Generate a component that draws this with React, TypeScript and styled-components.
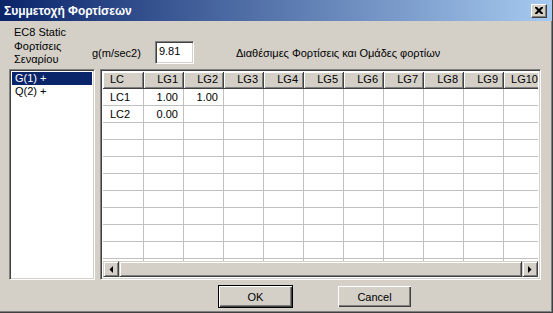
import React from "react";
import styled, { createGlobalStyle } from "styled-components";

const Global = createGlobalStyle`
  html, body { margin: 0; padding: 0; }
  body {
    width: 553px; height: 313px; overflow: hidden;
    background: #d4d0c8;
    font-family: "Liberation Sans", Arial, sans-serif;
    font-size: 11px; color: #000;
  }
`;

const Window = styled.div`
  width: 553px; height: 313px; box-sizing: border-box;
  display: flex; flex-direction: column;
  background: #d4d0c8;
  border-right: 1px solid #404040; border-bottom: 1px solid #404040;
  box-shadow: inset -1px -1px 0 #808080;
`;

const TitleBar = styled.div`
  height: 21px; flex: none; display: flex; align-items: center;
  justify-content: space-between;
  background: linear-gradient(to right, #0a246a, #a6caf0);
  padding: 0 5px 0 4px;
`;

const Title = styled.span`
  color: #fff; font-weight: bold; font-size: 12px;
  font-family: "Liberation Sans", Arial, sans-serif;
`;

const CloseButton = styled.div`
  width: 16px; height: 14px; box-sizing: border-box;
  background: #d4d0c8;
  border-top: 1px solid #fff; border-left: 1px solid #fff;
  border-right: 1px solid #404040; border-bottom: 1px solid #404040;
  box-shadow: inset -1px -1px 0 #808080;
  display: flex; align-items: center; justify-content: center;
`;

const Body = styled.div`
  flex: 1; display: flex; flex-direction: column;
`;

const Main = styled.div`
  display: flex; padding-left: 9px; gap: 5px;
`;

const LeftColumn = styled.div`
  width: 86px; display: flex; flex-direction: column;
  padding-top: 5px;
`;

const Label = styled.div<{ $mb?: number }>`
  line-height: 13px; padding-left: 5px;
  margin-bottom: ${(p) => p.$mb ?? 0}px;
`;

const Sunken = styled.div`
  box-sizing: border-box;
  border-top: 1px solid #808080; border-left: 1px solid #808080;
  border-right: 1px solid #fff; border-bottom: 1px solid #fff;
  box-shadow: inset 1px 1px 0 #404040, inset -1px -1px 0 #d4d0c8;
`;

const ListBox = styled(Sunken)`
  height: 211px; background: #fff; padding: 2px;
  margin-top: 3px;
`;

const ListItem = styled.div<{ $sel?: boolean }>`
  height: 13px; line-height: 13px; padding-left: 3px;
  background: ${(p) => (p.$sel ? "#0a246a" : "transparent")};
  color: ${(p) => (p.$sel ? "#fff" : "#000")};
`;

const RightColumn = styled.div`
  display: flex; flex-direction: column; padding-top: 20px;
`;

const TopRow = styled.div`
  display: flex; align-items: center; height: 23px;
  margin-left: -8px; margin-bottom: 5px;
`;

const InputBox = styled(Sunken)`
  width: 39px; height: 23px; background: #fff;
  margin-left: 14px; margin-right: 42px;
  padding: 3px 0 0 3px; line-height: 13px;
`;

const GridFrame = styled(Sunken)`
  width: 441px; height: 211px; background: #fff;
  padding: 2px; display: flex; flex-direction: column; overflow: hidden;
`;

const GridArea = styled.div`
  flex: 1; overflow: hidden;
`;

const GridRow = styled.div`
  display: grid; grid-template-columns: 41px repeat(10, 40px);
  height: 17px;
`;

const HeadCell = styled.div<{ $left?: boolean }>`
  box-sizing: border-box; height: 17px; line-height: 15px;
  background: #d4d0c8;
  border-right: 1px solid #404040; border-bottom: 1px solid #404040;
  box-shadow: inset 1px 1px 0 #fff, inset -1px -1px 0 #808080;
  text-align: ${(p) => (p.$left ? "left" : "right")};
  padding: ${(p) => (p.$left ? "0 0 0 7px" : "0 5px 0 0")};
  white-space: nowrap; overflow: hidden;
`;

const Cell = styled.div<{ $left?: boolean }>`
  box-sizing: border-box; height: 17px; line-height: 16px;
  border-right: 1px solid #c0c0c0; border-bottom: 1px solid #c0c0c0;
  text-align: ${(p) => (p.$left ? "left" : "right")};
  padding: ${(p) => (p.$left ? "0 0 0 7px" : "0 5px 0 0")};
  white-space: nowrap;
`;

const ScrollBar = styled.div`
  height: 16px; flex: none; display: flex; background: #e8e6e1;
`;

const Raised = styled.div`
  box-sizing: border-box; background: #d4d0c8;
  border-top: 1px solid #d4d0c8; border-left: 1px solid #d4d0c8;
  border-right: 1px solid #404040; border-bottom: 1px solid #404040;
  box-shadow: inset 1px 1px 0 #fff, inset -1px -1px 0 #808080;
`;

const ArrowButton = styled(Raised)`
  width: 16px; height: 16px; flex: none;
  display: flex; align-items: center; justify-content: center;
`;

const Thumb = styled(Raised)`
  flex: 1; height: 16px;
`;

const ButtonRow = styled.div`
  display: flex; gap: 44px; padding-left: 218px; margin-top: 5px;
`;

const Button = styled.div<{ $default?: boolean }>`
  width: 75px; height: 23px; box-sizing: border-box;
  display: flex; align-items: center; justify-content: center;
  background: #d4d0c8;
  border: 1px solid ${(p) => (p.$default ? "#000" : "transparent")};
  box-shadow: inset 1px 1px 0 #fff, inset -1px -1px 0 #404040, inset -2px -2px 0 #808080;
`;

const cols = ["LC", "LG1", "LG2", "LG3", "LG4", "LG5", "LG6", "LG7", "LG8", "LG9", "LG10"];
const data: string[][] = [
  ["LC1", "1.00", "1.00"],
  ["LC2", "0.00"],
];

export default function App() {
  const rows: string[][] = [];
  for (let i = 0; i < 11; i++) rows.push(data[i] ?? []);
  return (
    <>
      <Global />
      <Window>
        <TitleBar>
          <Title>Συμμετοχή Φορτίσεων</Title>
          <CloseButton>
            <svg width="8" height="7" viewBox="0 0 8 7">
              <path d="M0 0h2l2 2 2-2h2v1L5.5 3.5 8 6v1H6L4 5 2 7H0V6l2.5-2.5L0 1z" fill="#000" />
            </svg>
          </CloseButton>
        </TitleBar>
        <Body>
          <Main>
            <LeftColumn>
              <Label $mb={1}>EC8 Static</Label>
              <Label>
                Φορτίσεις
                <br />
                Σεναρίου
              </Label>
              <ListBox>
                <ListItem $sel>G(1) +</ListItem>
                <ListItem>Q(2) +</ListItem>
              </ListBox>
            </LeftColumn>
            <RightColumn>
              <TopRow>
                <span>g(m/sec2)</span>
                <InputBox>9.81</InputBox>
                <span>Διαθέσιμες Φορτίσεις και Ομάδες φορτίων</span>
              </TopRow>
              <GridFrame>
                <GridArea>
                  <GridRow>
                    {cols.map((c, i) => (
                      <HeadCell key={c} $left={i === 0}>
                        {c}
                      </HeadCell>
                    ))}
                  </GridRow>
                  {rows.map((r, ri) => (
                    <GridRow key={ri}>
                      {cols.map((c, i) => (
                        <Cell key={c} $left={i === 0}>
                          {r[i] ?? ""}
                        </Cell>
                      ))}
                    </GridRow>
                  ))}
                </GridArea>
                <ScrollBar>
                  <ArrowButton>
                    <svg width="4" height="7" viewBox="0 0 4 7">
                      <path d="M4 0v7L0.5 3.5z" fill="#000" />
                    </svg>
                  </ArrowButton>
                  <Thumb />
                  <ArrowButton>
                    <svg width="4" height="7" viewBox="0 0 4 7">
                      <path d="M0 0v7l3.5-3.5z" fill="#000" />
                    </svg>
                  </ArrowButton>
                </ScrollBar>
              </GridFrame>
            </RightColumn>
          </Main>
          <ButtonRow>
            <Button $default>OK</Button>
            <Button>Cancel</Button>
          </ButtonRow>
        </Body>
      </Window>
    </>
  );
}
